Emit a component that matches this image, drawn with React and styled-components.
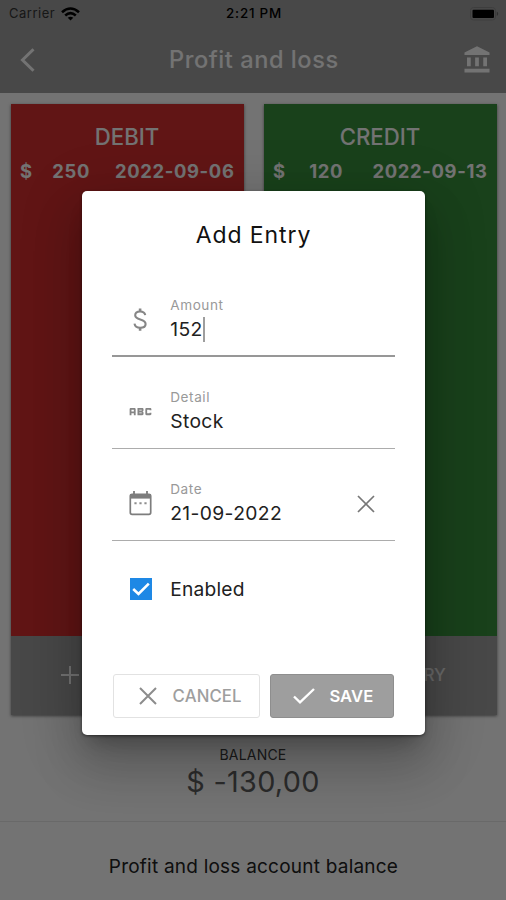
import React from "react";
import styled, { createGlobalStyle } from "styled-components";
import { MdAccountBalance, MdAbc } from "react-icons/md";

const GlobalStyle = createGlobalStyle`
  * {
    box-sizing: border-box;
  }
  body {
    margin: 0;
    font-family: Inter, Roboto, sans-serif;
  }
`;

const Screen = styled.div`
  position: relative;
  width: 506px;
  height: 900px;
  overflow: hidden;
  background: #fafafa;
  display: flex;
  flex-direction: column;
`;

const Label = styled.span`
  display: block;
  white-space: nowrap;
  font-size: ${(p) => p.$size}px;
  line-height: ${(p) => p.$line || p.$size}px;
  font-weight: ${(p) => p.$weight || 400};
  letter-spacing: ${(p) => p.$spacing || 0}px;
  color: ${(p) => p.$color || "#212121"};
`;

const Header = styled.header`
  height: 93px;
  flex: none;
  background: #9e9e9e;
`;

const StatusBar = styled.div`
  height: 27px;
  padding: 0 7px 0 9px;
  display: grid;
  grid-template-columns: 1fr auto 1fr;
  align-items: center;
`;

const Carrier = styled.div`
  display: flex;
  align-items: center;
  gap: 6px;
`;

const BatteryIcon = styled.svg`
  justify-self: end;
`;

const TitleBar = styled.div`
  height: 65px;
  padding: 0 14px 0 20px;
  display: grid;
  grid-template-columns: 149px auto 1fr;
  align-items: center;

  > :last-child {
    justify-self: end;
  }
`;

const Panels = styled.main`
  height: 611px;
  flex: none;
  margin: 10.5px 9.5px 1px 10.5px;
  display: grid;
  grid-template-columns: 1fr 1fr;
  gap: 20px;
`;

const Panel = styled.section`
  display: flex;
  flex-direction: column;
  align-items: center;
  background: ${(p) => p.$color};
  box-shadow: 0 1px 3px rgba(0, 0, 0, 0.5);
`;

const PanelTitle = styled.div`
  padding-top: 19.5px;
  height: 53px;
`;

const EntryRow = styled.div`
  width: 100%;
  flex: 1;
  padding: 0 9px 0 9.5px;
  display: grid;
  grid-template-columns: 32px 38px 1fr;
  align-items: start;
  text-align: right;

  > :first-child {
    text-align: left;
  }
`;

const PanelFooter = styled.div`
  width: 100%;
  height: 78.5px;
  display: flex;
  align-items: center;
  justify-content: center;
  gap: 16px;
  background: #9e9e9e;
`;

const Balance = styled.div`
  height: 106.5px;
  padding-top: 30px;
  display: flex;
  flex-direction: column;
  align-items: center;
  gap: 3px;
  border-bottom: 1px solid #e4e4e4;
`;

const Footer = styled.footer`
  flex: 1;
  display: flex;
  justify-content: center;
  padding: 32px 0 0 1px;
`;

const Overlay = styled.div`
  position: absolute;
  inset: 0;
  background: rgba(0, 0, 0, 0.54);
  display: flex;
  justify-content: center;
  align-items: flex-start;
  padding: 190.5px 0 0 1px;
`;

const Dialog = styled.div`
  width: 343.5px;
  height: 544.5px;
  padding: 0 30px;
  border-radius: 5px;
  background: #fff;
  box-shadow: 0 14px 19px -8px rgba(0, 0, 0, 0.24), 0 30px 48px 4px rgba(0, 0, 0, 0.16),
    0 11px 58px 10px rgba(0, 0, 0, 0.12), 0 1px 3px rgba(0, 0, 0, 0.5);
`;

const DialogTitle = styled.div`
  height: 73.5px;
  padding-top: 29px;
  display: flex;
  justify-content: center;
`;

const Field = styled.div`
  height: ${(p) => (p.$focused ? 93 : 91.8)}px;
  padding-top: ${(p) => (p.$focused ? 32 : 31)}px;
  display: grid;
  grid-template-columns: 58.5px 1fr 38px;
  border-bottom: ${(p) => (p.$focused ? "2px solid #979797" : "1px solid #acacac")};
`;

const FieldIcon = styled.div`
  padding: 9px 0 0 14.5px;
  color: #858585;
  font-size: 29px;
  line-height: 0;
`;

const FieldValue = styled.div`
  display: flex;
  align-items: center;
  height: 26px;
  margin-top: 2px;
`;

const Caret = styled.i`
  width: 2px;
  height: 25px;
  background: #9e9e9e;
`;

const ClearButton = styled.div`
  padding-top: 15px;
  line-height: 0;
`;

const CheckRow = styled.div`
  height: 133.7px;
  padding: 37px 0 0 18px;
  display: flex;
  align-items: flex-start;
  gap: 18.5px;
`;

const Checkbox = styled.div`
  width: 22px;
  height: 22px;
  background: #1e88e5;
  line-height: 0;
`;

const Actions = styled.div`
  display: flex;
  gap: 10px;
  padding: 0 1px;
`;

const Button = styled.div`
  width: ${(p) => p.$width}px;
  height: 44px;
  display: flex;
  align-items: center;
  justify-content: center;
  gap: ${(p) => p.$gap}px;
  padding-left: ${(p) => p.$indent || 0}px;
  border-radius: 3px;
  border: 1px solid ${(p) => (p.$filled ? "#8e8e8e" : "#e2e2e2")};
  background: ${(p) => (p.$filled ? "#9e9e9e" : "#fff")};
`;

const Cross = ({ size, color, width }) => (
  <svg width={size} height={size} viewBox="0 0 18 18" fill="none" stroke={color} strokeWidth={width}>
    <path d="M1 1L17 17M17 1L1 17" />
  </svg>
);

const Dollar = () => (
  <svg width="29" height="29" viewBox="0 0 29 29" fill="none" stroke="#868686" strokeWidth="2.1">
    <path d="M19.2 10.2C18.8 7.6 16.8 6.5 14.1 6.5C11.3 6.5 9.2 7.8 9.2 10.2C9.2 12.7 11.4 13.6 14.3 14.4C17.2 15.2 19.6 16.2 19.6 19C19.6 21.5 17.3 22.8 14.2 22.8C11 22.8 8.9 21.4 8.5 18.7" />
    <path d="M14.1 3.6V6.5M14.1 22.8V25.7" strokeWidth="2.6" />
  </svg>
);

const Calendar = () => (
  <svg width="29" height="29" viewBox="0 0 29 29" fill="none">
    <rect x="4.3" y="5.3" width="20.4" height="20" rx="1.8" stroke="#7d7d7d" strokeWidth="1.7" />
    <path d="M4 5h21v4.6H4z" fill="#7d7d7d" />
    <path d="M8 2v4M21 2v4" stroke="#7d7d7d" strokeWidth="1.8" />
    <path d="M8.4 14.3h2.2M13.4 14.3h2.2M18.4 14.3h2.2" stroke="#8e8e8e" strokeWidth="2" />
  </svg>
);

const panels = [
  { title: "DEBIT", color: "#d32f2f", amount: "250", date: "2022-09-06" },
  { title: "CREDIT", color: "#388e3c", amount: "120", date: "2022-09-13" },
];

const fields = [
  { label: "Amount", value: "152", icon: <Dollar />, focused: true },
  { label: "Detail", value: "Stock", icon: <MdAbc /> },
  { label: "Date", value: "21-09-2022", icon: <Calendar />, clearable: true },
];

export default function App() {
  return (
    <>
      <GlobalStyle />
      <Screen>
        <Header>
          <StatusBar>
            <Carrier>
              <Label $size={13} $spacing={0.5} $color="#333">Carrier</Label>
              <svg width="19" height="14" viewBox="0 0 19 14" fill="none" stroke="#000" strokeWidth="2.6">
                <path d="M1 5.2Q9.5 -2.2 18 5.2" />
                <path d="M4.2 8.4Q9.5 3.8 14.8 8.4" />
                <path d="M9.5 13.6L6.7 10.8Q9.5 8.6 12.3 10.8Z" fill="#000" stroke="none" />
              </svg>
            </Carrier>
            <Label $size={13.4} $weight={500} $spacing={0.75} $color="#000">2:21 PM</Label>
            <BatteryIcon width="29" height="14" viewBox="0 0 29 14">
              <rect x="0.5" y="0.5" width="25" height="12.5" rx="3" fill="none" stroke="#888" />
              <rect x="2.5" y="2.7" width="21.5" height="8.3" rx="1" fill="#000" />
              <path d="M26.8 4.5Q29.6 6.7 26.8 9Z" fill="#666" />
            </BatteryIcon>
          </StatusBar>
          <TitleBar>
            <svg width="16" height="24" viewBox="0 0 16 24" fill="none" stroke="#fafafa" strokeWidth="3">
              <path d="M13.5 1.2L2.5 12L13.5 22.8" />
            </svg>
            <Label $size={23.6} $line={28} $weight={500} $spacing={0.55} $color="#fafafa">Profit and loss</Label>
            <MdAccountBalance size={30} color="#fafafa" />
          </TitleBar>
        </Header>

        <Panels>
          {panels.map((p) => (
            <Panel key={p.title} $color={p.color}>
              <PanelTitle>
                <Label $size={22.2} $line={28} $weight={500} $color="#fafafa">{p.title}</Label>
              </PanelTitle>
              <EntryRow>
                <Label $size={18.4} $line={28} $weight={700} $spacing={0.65} $color="#fafafa">$</Label>
                <Label $size={18.4} $line={28} $weight={700} $spacing={0.65} $color="#fafafa">{p.amount}</Label>
                <Label $size={18.4} $line={28} $weight={700} $spacing={0.65} $color="#fafafa">{p.date}</Label>
              </EntryRow>
              <PanelFooter>
                <svg width="18" height="18" viewBox="0 0 18 18" stroke="#fafafa" strokeWidth="2">
                  <path d="M9 0V18M0 9H18" />
                </svg>
                <Label $size={17} $weight={500} $color="#e4e4e4">ADD ENTRY</Label>
              </PanelFooter>
            </Panel>
          ))}
        </Panels>

        <Balance>
          <Label $size={14} $line={18} $spacing={0.2} $color="#3c3c3c">BALANCE</Label>
          <Label $size={28.8} $line={30} $spacing={0.3} $color="#5f5f5f">$ -130,00</Label>
        </Balance>
        <Footer>
          <Label $size={19} $line={26} $spacing={0.22}>Profit and loss account balance</Label>
        </Footer>

        <Overlay>
          <Dialog>
            <DialogTitle>
              <Label $size={23} $line={30} $spacing={0.9} $color="#111">Add Entry</Label>
            </DialogTitle>
            {fields.map((f) => (
              <Field key={f.label} $focused={f.focused}>
                <FieldIcon>{f.icon}</FieldIcon>
                <div>
                  <Label $size={13.6} $line={18} $spacing={0.55} $color="#999">{f.label}</Label>
                  <FieldValue>
                    <Label $size={19.3} $line={26} $spacing={0.35}>{f.value}</Label>
                    {f.focused && <Caret />}
                  </FieldValue>
                </div>
                {f.clearable && (
                  <ClearButton>
                    <Cross size={18} color="#777" width={1.7} />
                  </ClearButton>
                )}
              </Field>
            ))}
            <CheckRow>
              <Checkbox>
                <svg width="22" height="22" viewBox="0 0 22 22" fill="none" stroke="#fff" strokeWidth="2.6">
                  <path d="M3.2 11L8.5 16L18.8 5.6" />
                </svg>
              </Checkbox>
              <Label $size={19.2} $line={22} $spacing={0.2}>Enabled</Label>
            </CheckRow>
            <Actions>
              <Button $width={148} $gap={16} $indent={7}>
                <Cross size={18} color="#8c8c8c" width={2} />
                <Label $size={16.8} $weight={500} $spacing={0.1} $color="#9e9e9e">CANCEL</Label>
              </Button>
              <Button $width={124} $gap={14} $indent={2} $filled>
                <svg width="22" height="16" viewBox="0 0 22 16" fill="none" stroke="#fff" strokeWidth="2.4">
                  <path d="M1 8.5L7 14.3L21 1" />
                </svg>
                <Label $size={16.6} $weight={600} $spacing={0.1} $color="#fff">SAVE</Label>
              </Button>
            </Actions>
          </Dialog>
        </Overlay>
      </Screen>
    </>
  );
}
